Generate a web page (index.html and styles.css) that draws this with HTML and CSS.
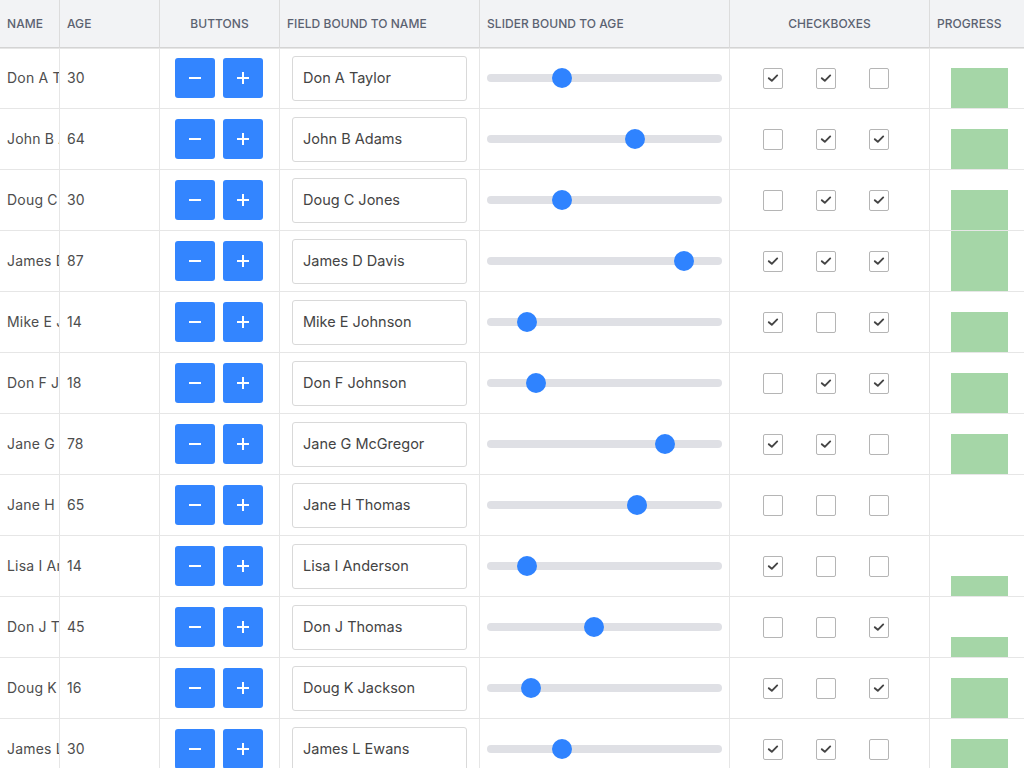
FILE: index.html
```html
<!DOCTYPE html>
<html>
<head>
<meta charset="utf-8">
<link rel="stylesheet" href="styles.css">
</head>
<body>
<div class="grid" id="grid">
  <div class="hcell">Name</div>
  <div class="hcell">Age</div>
  <div class="hcell center">Buttons</div>
  <div class="hcell">Field bound to name</div>
  <div class="hcell">Slider bound to age</div>
  <div class="hcell center">Checkboxes</div>
  <div class="hcell">Progress</div>
</div>
<script src="app.js"></script>
</body>
</html>
```
FILE: app.js
```js
var rows = [
  ["Don A Taylor", 30, [1,1,0]],
  ["John B Adams", 64, [0,1,1]],
  ["Doug C Jones", 30, [0,1,1]],
  ["James D Davis", 87, [1,1,1]],
  ["Mike E Johnson", 14, [1,0,1]],
  ["Don F Johnson", 18, [0,1,1]],
  ["Jane G McGregor", 78, [1,1,0]],
  ["Jane H Thomas", 65, [0,0,0]],
  ["Lisa I Anderson", 14, [1,0,0]],
  ["Don J Thomas", 45, [0,0,1]],
  ["Doug K Jackson", 16, [1,0,1]],
  ["James L Ewans", 30, [1,1,0]]
];
var minus = '<svg width="14" height="14" viewBox="0 0 14 14"><rect x="1" y="6" width="12" height="2" fill="#fff"/></svg>';
var plus = '<svg width="14" height="14" viewBox="0 0 14 14"><rect x="1" y="6" width="12" height="2" fill="#fff"/><rect x="6" y="1" width="2" height="12" fill="#fff"/></svg>';
var tick = '<svg width="18" height="18" viewBox="0 0 18 18"><polyline points="4.8,9.2 7.8,11.8 13.2,6.4" fill="none" stroke="#444" stroke-width="1.9" stroke-linecap="round" stroke-linejoin="round"/></svg>';
var html = "";
rows.forEach(function (r) {
  var count = r[2].reduce(function (a, b) { return a + b; }, 0);
  html += '<div class="cell name">' + r[0] + '</div>';
  html += '<div class="cell age">' + r[1] + '</div>';
  html += '<div class="cell buttons"><button class="btn">' + minus + '</button><button class="btn">' + plus + '</button></div>';
  html += '<div class="cell field"><input class="input" type="text" value="' + r[0] + '"></div>';
  html += '<div class="cell slider"><div class="track"><div class="thumb" style="left:' + (r[1] * 2.15) + 'px"></div></div></div>';
  html += '<div class="cell checks">' + r[2].map(function (c) {
    return '<span class="cb">' + (c ? tick : '') + '</span>';
  }).join('') + '</div>';
  html += '<div class="cell progress"><div class="bar" style="height:' + (count * 20) + 'px"></div></div>';
});
document.getElementById("grid").insertAdjacentHTML("beforeend", html);
```
FILE: styles.css
```css
html, body {
  margin: 0;
  padding: 0;
  background: #fff;
  overflow: hidden;
  width: 1024px;
  height: 768px;
}
body {
  font-family: "Inter", "Open Sans", sans-serif;
  color: #444;
}
.grid {
  display: grid;
  grid-template-columns: 60px 100px 120px 200px 250px 200px 100px;
  grid-auto-rows: 61px;
  grid-template-rows: 48px;
  width: 1030px;
}
.hcell {
  background: #f2f3f5;
  border-right: 1px solid #dcdcdc;
  border-bottom: 1px solid #d4d4d4;
  box-shadow: 0 1px 0 #e6e6e6;
  box-sizing: border-box;
  display: flex;
  align-items: center;
  padding: 0 7px 1px;
  font-size: 12px;
  font-weight: 500;
  text-transform: uppercase;
  color: #5b6271;
  letter-spacing: 0.05px;
  white-space: nowrap;
  overflow: hidden;
}
.hcell.center {
  justify-content: center;
}
.cell {
  border-right: 1px solid #e6e6e6;
  border-bottom: 1px solid #e6e6e6;
  box-sizing: border-box;
  display: flex;
  align-items: center;
  overflow: hidden;
  white-space: nowrap;
  font-size: 14px;
  color: #4d4d4d;
}
.name, .age {
  padding: 0 7px 2px;
}
.name {
  padding-right: 1px;
  letter-spacing: 0.2px;
}
.buttons {
  justify-content: center;
  gap: 8px;
  padding-right: 1px;
}
.btn {
  width: 40px;
  height: 40px;
  border: none;
  border-radius: 3px;
  background: #3385ff;
  padding: 0;
  display: flex;
  align-items: center;
  justify-content: center;
}
.field {
  padding-left: 12px;
}
.input {
  width: 175px;
  height: 45px;
  box-sizing: border-box;
  border: 1px solid #d9d9d9;
  border-radius: 3px;
  padding: 0 10px 2px;
  font-family: inherit;
  font-size: 14.5px;
  color: #444;
  background: #fff;
  outline: none;
}
.slider {
  padding-left: 7px;
}
.track {
  position: relative;
  width: 235px;
  height: 8px;
  border-radius: 4px;
  background: #dfe0e5;
}
.thumb {
  position: absolute;
  top: -6px;
  width: 20px;
  height: 20px;
  border-radius: 50%;
  background: #2f83ff;
}
.checks {
  padding-left: 33px;
  gap: 33px;
}
.cb {
  width: 20px;
  height: 21px;
  box-sizing: border-box;
  border: 1px solid #b5b5b5;
  border-radius: 2px;
  background: #fff;
  display: flex;
  align-items: center;
  justify-content: center;
}
.progress {
  align-items: flex-end;
  padding-left: 21px;
  border-right: none;
}
.bar {
  width: 57px;
  background: #a5d6a7;
}
```
